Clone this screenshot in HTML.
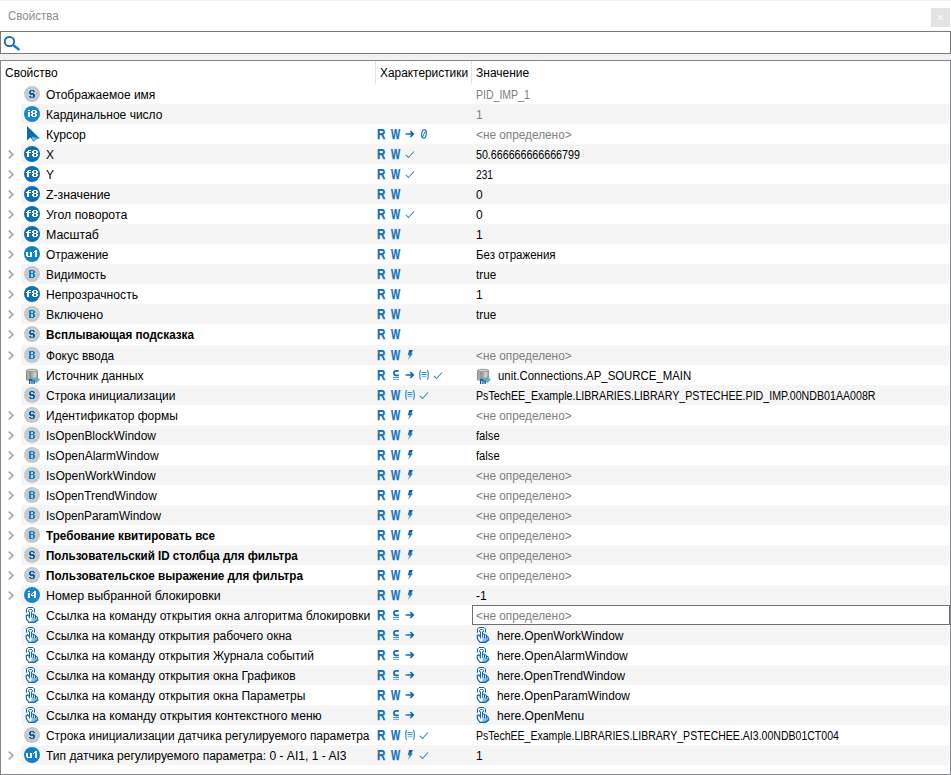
<!DOCTYPE html><html><head><meta charset="utf-8"><style>
*{margin:0;padding:0;box-sizing:border-box}
html,body{width:951px;height:775px;overflow:hidden;background:#fff}
body{position:relative;font-family:"Liberation Sans",sans-serif;font-size:12px;color:#000}
.a{position:absolute}
.t{position:absolute;white-space:nowrap;line-height:20px;height:20px;transform-origin:0 50%}
.band{position:absolute;left:21px;width:928px;height:20px;background:#f5f5f5}
.g{color:#7e7e7e}
.b{font-weight:bold}
svg{position:absolute;overflow:visible}
.rw{position:absolute;color:#1270b6;-webkit-text-stroke:0.25px #1270b6;font-weight:bold;font-size:14.5px;line-height:20px;height:20px;transform-origin:0 50%}
</style></head><body>
<div class="a" style="left:0;top:0;width:951px;height:1px;background:#f3f3f3"></div>
<div class="t" style="left:8px;top:6px;transform:scaleX(0.96);color:#8c8c8c">Свойства</div>
<div class="a" style="left:931px;top:8px;width:19px;height:19px;background:#e3e3e3"></div>
<svg style="left:931px;top:8px" width="19" height="19"><path d="M7.2 7.2 L11.8 11.8 M11.8 7.2 L7.2 11.8" stroke="#f7f7f7" stroke-width="1.3"/></svg>
<div class="a" style="left:0;top:31px;width:951px;height:23px;border:1px solid #7a7a7a;background:#fff"></div>
<svg style="left:0;top:31px" width="24" height="23"><circle cx="9.45" cy="10.5" r="4.7" fill="none" stroke="#0a5eaa" stroke-width="1.7"/><path d="M14 14.8 L18.6 18.2" stroke="#0a84c4" stroke-width="2.5" stroke-linecap="round"/></svg>
<div class="a" style="left:0;top:54px;width:951px;height:6px;background:#f0f0f0"></div>
<div class="a" style="left:0;top:60px;width:951px;height:715px;border:1px solid #828790;background:#fff"></div>
<div class="t" style="left:5px;top:63px">Свойство</div>
<div class="a" style="left:375px;top:61px;width:1px;height:23px;background:#e3e3e3"></div>
<div class="t" style="left:380px;top:63px;transform:scaleX(0.99)">Характеристики</div>
<div class="a" style="left:471px;top:61px;width:1px;height:23px;background:#e3e3e3"></div>
<div class="t" style="left:476px;top:63px">Значение</div>
<svg style="left:24px;top:86px" width="16" height="16" shape-rendering="auto"><circle cx="8" cy="8" r="8" fill="#c6c7c9"/><circle cx="8" cy="8" r="6.5" fill="#c9cacc"/><g fill="#0a64b4"><rect x="6" y="4" width="4" height="1"/><rect x="5" y="5" width="2" height="1"/><rect x="9" y="5" width="2" height="1"/><rect x="5" y="6" width="2" height="1"/><rect x="5" y="7" width="5" height="1"/><rect x="6" y="8" width="5" height="1"/><rect x="9" y="9" width="2" height="1"/><rect x="5" y="10" width="2" height="1"/><rect x="9" y="10" width="2" height="1"/><rect x="6" y="11" width="4" height="1"/></g></svg>
<div class="t" style="left:46px;top:85px">Отображаемое имя</div>

<div class="t g" style="left:476px;top:85px;transform:scaleX(0.877)">PID_IMP_1</div>
<div class="band" style="top:104px"></div>
<svg style="left:24px;top:106px" width="16" height="16" shape-rendering="auto"><circle cx="8" cy="8" r="8" fill="#1a88cc"/><g fill="#fff"><rect x="4" y="4" width="2" height="1"/><rect x="4" y="6" width="2" height="1"/><rect x="4" y="7" width="2" height="1"/><rect x="4" y="8" width="2" height="1"/><rect x="4" y="9" width="2" height="1"/><rect x="4" y="10" width="2" height="1"/></g><g fill="#fff"><rect x="8" y="4" width="4" height="1"/><rect x="7" y="5" width="2" height="1"/><rect x="11" y="5" width="2" height="1"/><rect x="7" y="6" width="2" height="1"/><rect x="11" y="6" width="2" height="1"/><rect x="8" y="7" width="4" height="1"/><rect x="7" y="8" width="2" height="1"/><rect x="11" y="8" width="2" height="1"/><rect x="7" y="9" width="2" height="1"/><rect x="11" y="9" width="2" height="1"/><rect x="8" y="10" width="4" height="1"/></g></svg>
<div class="t" style="left:46px;top:105px">Кардинальное число</div>

<div class="t g" style="left:476px;top:105px">1</div>
<svg style="left:20px;top:124px" width="24" height="20"><path d="M7 2 L19.8 14.5 L15.5 15.5 L13.5 18 L10.5 13.2 L7 16.5 Z" fill="#0b6ab5"/><path d="M12.5 12.5 L19.8 14.5 L15.5 15.8 L13.5 18 L11.8 14.5 Z" fill="#6ab0d8"/></svg>
<div class="t" style="left:46px;top:125px;transform:scaleX(1.024)">Курсор</div>
<div class="rw" style="left:377px;top:124.2px;transform:scaleX(0.8)">R</div><div class="rw" style="left:391px;top:124.2px;transform:scaleX(0.67)">W</div><svg style="left:405px;top:124px" width="10" height="20"><defs><linearGradient id="ag" x1="0" x2="1"><stop offset="0" stop-color="#2a9ad6"/><stop offset="1" stop-color="#0b5ea8"/></linearGradient></defs><rect x="0.5" y="9.15" width="7.5" height="1.7" fill="url(#ag)"/><path d="M5.4 7.2 L8.3 10 L5.4 12.8" fill="none" stroke="#0b62ac" stroke-width="1.6"/></svg><svg style="left:421px;top:124px" width="8" height="20"><ellipse cx="3" cy="9.8" rx="2.3" ry="4.3" transform="rotate(8 3 9.8)" fill="none" stroke="#2282c6" stroke-width="1.25"/><path d="M1.6 13.2 L4.6 6.4" stroke="#2282c6" stroke-width="1"/></svg>
<div class="t g" style="left:476px;top:125px;transform:scaleX(0.984)">&lt;не определено&gt;</div>
<div class="band" style="top:144px"></div>
<svg style="left:0;top:144px" width="16" height="20"><path d="M8.8 6.6 L12.8 10.5 L8.8 14.4" fill="none" stroke="#a6a6a6" stroke-width="1.7"/></svg>
<svg style="left:24px;top:146px" width="16" height="16" shape-rendering="auto"><circle cx="8" cy="8" r="8" fill="#0d6db5"/><g fill="#fff"><rect x="4" y="4" width="3" height="1"/><rect x="3" y="5" width="2" height="1"/><rect x="2" y="6" width="5" height="1"/><rect x="3" y="7" width="2" height="1"/><rect x="3" y="8" width="2" height="1"/><rect x="3" y="9" width="2" height="1"/><rect x="3" y="10" width="2" height="1"/></g><g fill="#fff"><rect x="9" y="4" width="4" height="1"/><rect x="8" y="5" width="2" height="1"/><rect x="12" y="5" width="2" height="1"/><rect x="8" y="6" width="2" height="1"/><rect x="12" y="6" width="2" height="1"/><rect x="9" y="7" width="4" height="1"/><rect x="8" y="8" width="2" height="1"/><rect x="12" y="8" width="2" height="1"/><rect x="8" y="9" width="2" height="1"/><rect x="12" y="9" width="2" height="1"/><rect x="9" y="10" width="4" height="1"/></g></svg>
<div class="t" style="left:46px;top:145px">X</div>
<div class="rw" style="left:377px;top:144.2px;transform:scaleX(0.8)">R</div><div class="rw" style="left:391px;top:144.2px;transform:scaleX(0.67)">W</div><svg style="left:405px;top:144px" width="10" height="20"><path d="M0.8 10.8 L3.5 13.5 L9 7.5" fill="none" stroke="#2d86c6" stroke-width="1.05"/></svg>
<div class="t" style="left:476px;top:145px;transform:scaleX(0.889)">50.666666666666799</div>
<svg style="left:0;top:164px" width="16" height="20"><path d="M8.8 6.6 L12.8 10.5 L8.8 14.4" fill="none" stroke="#a6a6a6" stroke-width="1.7"/></svg>
<svg style="left:24px;top:166px" width="16" height="16" shape-rendering="auto"><circle cx="8" cy="8" r="8" fill="#0d6db5"/><g fill="#fff"><rect x="4" y="4" width="3" height="1"/><rect x="3" y="5" width="2" height="1"/><rect x="2" y="6" width="5" height="1"/><rect x="3" y="7" width="2" height="1"/><rect x="3" y="8" width="2" height="1"/><rect x="3" y="9" width="2" height="1"/><rect x="3" y="10" width="2" height="1"/></g><g fill="#fff"><rect x="9" y="4" width="4" height="1"/><rect x="8" y="5" width="2" height="1"/><rect x="12" y="5" width="2" height="1"/><rect x="8" y="6" width="2" height="1"/><rect x="12" y="6" width="2" height="1"/><rect x="9" y="7" width="4" height="1"/><rect x="8" y="8" width="2" height="1"/><rect x="12" y="8" width="2" height="1"/><rect x="8" y="9" width="2" height="1"/><rect x="12" y="9" width="2" height="1"/><rect x="9" y="10" width="4" height="1"/></g></svg>
<div class="t" style="left:46px;top:165px">Y</div>
<div class="rw" style="left:377px;top:164.2px;transform:scaleX(0.8)">R</div><div class="rw" style="left:391px;top:164.2px;transform:scaleX(0.67)">W</div><svg style="left:405px;top:164px" width="10" height="20"><path d="M0.8 10.8 L3.5 13.5 L9 7.5" fill="none" stroke="#2d86c6" stroke-width="1.05"/></svg>
<div class="t" style="left:476px;top:165px;transform:scaleX(0.85)">231</div>
<div class="band" style="top:184px"></div>
<svg style="left:0;top:184px" width="16" height="20"><path d="M8.8 6.6 L12.8 10.5 L8.8 14.4" fill="none" stroke="#a6a6a6" stroke-width="1.7"/></svg>
<svg style="left:24px;top:186px" width="16" height="16" shape-rendering="auto"><circle cx="8" cy="8" r="8" fill="#0d6db5"/><g fill="#fff"><rect x="4" y="4" width="3" height="1"/><rect x="3" y="5" width="2" height="1"/><rect x="2" y="6" width="5" height="1"/><rect x="3" y="7" width="2" height="1"/><rect x="3" y="8" width="2" height="1"/><rect x="3" y="9" width="2" height="1"/><rect x="3" y="10" width="2" height="1"/></g><g fill="#fff"><rect x="9" y="4" width="4" height="1"/><rect x="8" y="5" width="2" height="1"/><rect x="12" y="5" width="2" height="1"/><rect x="8" y="6" width="2" height="1"/><rect x="12" y="6" width="2" height="1"/><rect x="9" y="7" width="4" height="1"/><rect x="8" y="8" width="2" height="1"/><rect x="12" y="8" width="2" height="1"/><rect x="8" y="9" width="2" height="1"/><rect x="12" y="9" width="2" height="1"/><rect x="9" y="10" width="4" height="1"/></g></svg>
<div class="t" style="left:46px;top:185px;transform:scaleX(1.025)">Z-значение</div>
<div class="rw" style="left:377px;top:184.2px;transform:scaleX(0.8)">R</div><div class="rw" style="left:391px;top:184.2px;transform:scaleX(0.67)">W</div>
<div class="t" style="left:476px;top:185px">0</div>
<svg style="left:0;top:204px" width="16" height="20"><path d="M8.8 6.6 L12.8 10.5 L8.8 14.4" fill="none" stroke="#a6a6a6" stroke-width="1.7"/></svg>
<svg style="left:24px;top:206px" width="16" height="16" shape-rendering="auto"><circle cx="8" cy="8" r="8" fill="#0d6db5"/><g fill="#fff"><rect x="4" y="4" width="3" height="1"/><rect x="3" y="5" width="2" height="1"/><rect x="2" y="6" width="5" height="1"/><rect x="3" y="7" width="2" height="1"/><rect x="3" y="8" width="2" height="1"/><rect x="3" y="9" width="2" height="1"/><rect x="3" y="10" width="2" height="1"/></g><g fill="#fff"><rect x="9" y="4" width="4" height="1"/><rect x="8" y="5" width="2" height="1"/><rect x="12" y="5" width="2" height="1"/><rect x="8" y="6" width="2" height="1"/><rect x="12" y="6" width="2" height="1"/><rect x="9" y="7" width="4" height="1"/><rect x="8" y="8" width="2" height="1"/><rect x="12" y="8" width="2" height="1"/><rect x="8" y="9" width="2" height="1"/><rect x="12" y="9" width="2" height="1"/><rect x="9" y="10" width="4" height="1"/></g></svg>
<div class="t" style="left:46px;top:205px;transform:scaleX(1.027)">Угол поворота</div>
<div class="rw" style="left:377px;top:204.2px;transform:scaleX(0.8)">R</div><div class="rw" style="left:391px;top:204.2px;transform:scaleX(0.67)">W</div><svg style="left:405px;top:204px" width="10" height="20"><path d="M0.8 10.8 L3.5 13.5 L9 7.5" fill="none" stroke="#2d86c6" stroke-width="1.05"/></svg>
<div class="t" style="left:476px;top:205px">0</div>
<div class="band" style="top:224px"></div>
<svg style="left:0;top:224px" width="16" height="20"><path d="M8.8 6.6 L12.8 10.5 L8.8 14.4" fill="none" stroke="#a6a6a6" stroke-width="1.7"/></svg>
<svg style="left:24px;top:226px" width="16" height="16" shape-rendering="auto"><circle cx="8" cy="8" r="8" fill="#0d6db5"/><g fill="#fff"><rect x="4" y="4" width="3" height="1"/><rect x="3" y="5" width="2" height="1"/><rect x="2" y="6" width="5" height="1"/><rect x="3" y="7" width="2" height="1"/><rect x="3" y="8" width="2" height="1"/><rect x="3" y="9" width="2" height="1"/><rect x="3" y="10" width="2" height="1"/></g><g fill="#fff"><rect x="9" y="4" width="4" height="1"/><rect x="8" y="5" width="2" height="1"/><rect x="12" y="5" width="2" height="1"/><rect x="8" y="6" width="2" height="1"/><rect x="12" y="6" width="2" height="1"/><rect x="9" y="7" width="4" height="1"/><rect x="8" y="8" width="2" height="1"/><rect x="12" y="8" width="2" height="1"/><rect x="8" y="9" width="2" height="1"/><rect x="12" y="9" width="2" height="1"/><rect x="9" y="10" width="4" height="1"/></g></svg>
<div class="t" style="left:46px;top:225px;transform:scaleX(1.03)">Масштаб</div>
<div class="rw" style="left:377px;top:224.2px;transform:scaleX(0.8)">R</div><div class="rw" style="left:391px;top:224.2px;transform:scaleX(0.67)">W</div>
<div class="t" style="left:476px;top:225px">1</div>
<svg style="left:0;top:244px" width="16" height="20"><path d="M8.8 6.6 L12.8 10.5 L8.8 14.4" fill="none" stroke="#a6a6a6" stroke-width="1.7"/></svg>
<svg style="left:24px;top:246px" width="16" height="16" shape-rendering="auto"><circle cx="8" cy="8" r="8" fill="#1282c8"/><g fill="#fff"><rect x="2" y="6" width="2" height="1"/><rect x="6" y="6" width="2" height="1"/><rect x="2" y="7" width="2" height="1"/><rect x="6" y="7" width="2" height="1"/><rect x="2" y="8" width="2" height="1"/><rect x="6" y="8" width="2" height="1"/><rect x="2" y="9" width="2" height="1"/><rect x="6" y="9" width="2" height="1"/><rect x="3" y="10" width="5" height="1"/></g><g fill="#fff"><rect x="11" y="4" width="2" height="1"/><rect x="10" y="5" width="3" height="1"/><rect x="9" y="6" width="1" height="1"/><rect x="11" y="6" width="2" height="1"/><rect x="11" y="7" width="2" height="1"/><rect x="11" y="8" width="2" height="1"/><rect x="11" y="9" width="2" height="1"/><rect x="11" y="10" width="2" height="1"/></g></svg>
<div class="t" style="left:46px;top:245px;transform:scaleX(0.994)">Отражение</div>
<div class="rw" style="left:377px;top:244.2px;transform:scaleX(0.8)">R</div><div class="rw" style="left:391px;top:244.2px;transform:scaleX(0.67)">W</div>
<div class="t" style="left:476px;top:245px;transform:scaleX(0.96)">Без отражения</div>
<div class="band" style="top:264px"></div>
<svg style="left:0;top:264px" width="16" height="20"><path d="M8.8 6.6 L12.8 10.5 L8.8 14.4" fill="none" stroke="#a6a6a6" stroke-width="1.7"/></svg>
<svg style="left:24px;top:266px" width="16" height="16" shape-rendering="auto"><circle cx="8" cy="8" r="8" fill="#c6c7c9"/><circle cx="8" cy="8" r="6.5" fill="#c9cacc"/><g fill="#1682ce"><rect x="5" y="4" width="5" height="1"/><rect x="5" y="5" width="2" height="1"/><rect x="9" y="5" width="2" height="1"/><rect x="5" y="6" width="2" height="1"/><rect x="9" y="6" width="2" height="1"/><rect x="5" y="7" width="5" height="1"/><rect x="5" y="8" width="2" height="1"/><rect x="9" y="8" width="2" height="1"/><rect x="5" y="9" width="2" height="1"/><rect x="9" y="9" width="2" height="1"/><rect x="5" y="10" width="2" height="1"/><rect x="9" y="10" width="2" height="1"/><rect x="5" y="11" width="5" height="1"/></g></svg>
<div class="t" style="left:46px;top:265px;transform:scaleX(0.985)">Видимость</div>
<div class="rw" style="left:377px;top:264.2px;transform:scaleX(0.8)">R</div><div class="rw" style="left:391px;top:264.2px;transform:scaleX(0.67)">W</div>
<div class="t" style="left:476px;top:265px;transform:scaleX(0.975)">true</div>
<svg style="left:0;top:284px" width="16" height="20"><path d="M8.8 6.6 L12.8 10.5 L8.8 14.4" fill="none" stroke="#a6a6a6" stroke-width="1.7"/></svg>
<svg style="left:24px;top:286px" width="16" height="16" shape-rendering="auto"><circle cx="8" cy="8" r="8" fill="#0d6db5"/><g fill="#fff"><rect x="4" y="4" width="3" height="1"/><rect x="3" y="5" width="2" height="1"/><rect x="2" y="6" width="5" height="1"/><rect x="3" y="7" width="2" height="1"/><rect x="3" y="8" width="2" height="1"/><rect x="3" y="9" width="2" height="1"/><rect x="3" y="10" width="2" height="1"/></g><g fill="#fff"><rect x="9" y="4" width="4" height="1"/><rect x="8" y="5" width="2" height="1"/><rect x="12" y="5" width="2" height="1"/><rect x="8" y="6" width="2" height="1"/><rect x="12" y="6" width="2" height="1"/><rect x="9" y="7" width="4" height="1"/><rect x="8" y="8" width="2" height="1"/><rect x="12" y="8" width="2" height="1"/><rect x="8" y="9" width="2" height="1"/><rect x="12" y="9" width="2" height="1"/><rect x="9" y="10" width="4" height="1"/></g></svg>
<div class="t" style="left:46px;top:285px;transform:scaleX(1.012)">Непрозрачность</div>
<div class="rw" style="left:377px;top:284.2px;transform:scaleX(0.8)">R</div><div class="rw" style="left:391px;top:284.2px;transform:scaleX(0.67)">W</div>
<div class="t" style="left:476px;top:285px">1</div>
<div class="band" style="top:304px"></div>
<svg style="left:0;top:304px" width="16" height="20"><path d="M8.8 6.6 L12.8 10.5 L8.8 14.4" fill="none" stroke="#a6a6a6" stroke-width="1.7"/></svg>
<svg style="left:24px;top:306px" width="16" height="16" shape-rendering="auto"><circle cx="8" cy="8" r="8" fill="#c6c7c9"/><circle cx="8" cy="8" r="6.5" fill="#c9cacc"/><g fill="#1682ce"><rect x="5" y="4" width="5" height="1"/><rect x="5" y="5" width="2" height="1"/><rect x="9" y="5" width="2" height="1"/><rect x="5" y="6" width="2" height="1"/><rect x="9" y="6" width="2" height="1"/><rect x="5" y="7" width="5" height="1"/><rect x="5" y="8" width="2" height="1"/><rect x="9" y="8" width="2" height="1"/><rect x="5" y="9" width="2" height="1"/><rect x="9" y="9" width="2" height="1"/><rect x="5" y="10" width="2" height="1"/><rect x="9" y="10" width="2" height="1"/><rect x="5" y="11" width="5" height="1"/></g></svg>
<div class="t" style="left:46px;top:305px;transform:scaleX(1.031)">Включено</div>
<div class="rw" style="left:377px;top:304.2px;transform:scaleX(0.8)">R</div><div class="rw" style="left:391px;top:304.2px;transform:scaleX(0.67)">W</div>
<div class="t" style="left:476px;top:305px;transform:scaleX(0.975)">true</div>
<svg style="left:0;top:324px" width="16" height="20"><path d="M8.8 6.6 L12.8 10.5 L8.8 14.4" fill="none" stroke="#a6a6a6" stroke-width="1.7"/></svg>
<svg style="left:24px;top:326px" width="16" height="16" shape-rendering="auto"><circle cx="8" cy="8" r="8" fill="#c6c7c9"/><circle cx="8" cy="8" r="6.5" fill="#c9cacc"/><g fill="#0a64b4"><rect x="6" y="4" width="4" height="1"/><rect x="5" y="5" width="2" height="1"/><rect x="9" y="5" width="2" height="1"/><rect x="5" y="6" width="2" height="1"/><rect x="5" y="7" width="5" height="1"/><rect x="6" y="8" width="5" height="1"/><rect x="9" y="9" width="2" height="1"/><rect x="5" y="10" width="2" height="1"/><rect x="9" y="10" width="2" height="1"/><rect x="6" y="11" width="4" height="1"/></g></svg>
<div class="t b" style="left:46px;top:325px;transform:scaleX(0.974)">Всплывающая подсказка</div>
<div class="rw" style="left:377px;top:324.2px;transform:scaleX(0.8)">R</div><div class="rw" style="left:391px;top:324.2px;transform:scaleX(0.67)">W</div>
<div class="band" style="top:345px"></div>
<svg style="left:0;top:345px" width="16" height="20"><path d="M8.8 6.6 L12.8 10.5 L8.8 14.4" fill="none" stroke="#a6a6a6" stroke-width="1.7"/></svg>
<svg style="left:24px;top:347px" width="16" height="16" shape-rendering="auto"><circle cx="8" cy="8" r="8" fill="#c6c7c9"/><circle cx="8" cy="8" r="6.5" fill="#c9cacc"/><g fill="#1682ce"><rect x="5" y="4" width="5" height="1"/><rect x="5" y="5" width="2" height="1"/><rect x="9" y="5" width="2" height="1"/><rect x="5" y="6" width="2" height="1"/><rect x="9" y="6" width="2" height="1"/><rect x="5" y="7" width="5" height="1"/><rect x="5" y="8" width="2" height="1"/><rect x="9" y="8" width="2" height="1"/><rect x="5" y="9" width="2" height="1"/><rect x="9" y="9" width="2" height="1"/><rect x="5" y="10" width="2" height="1"/><rect x="9" y="10" width="2" height="1"/><rect x="5" y="11" width="5" height="1"/></g></svg>
<div class="t" style="left:46px;top:346px;transform:scaleX(0.987)">Фокус ввода</div>
<div class="rw" style="left:377px;top:345.2px;transform:scaleX(0.8)">R</div><div class="rw" style="left:391px;top:345.2px;transform:scaleX(0.67)">W</div><svg style="left:405px;top:345px" width="10" height="20"><defs><linearGradient id="zg" x1="0" y1="0" x2="0" y2="1"><stop offset="0" stop-color="#0a56a6"/><stop offset="1" stop-color="#3aa2dc"/></linearGradient></defs><path d="M4.2 4.9 L7.9 4.9 L6.3 8.4 L7.9 8.4 L2.8 14.9 L4.5 10.3 L2.7 10.3 Z" fill="url(#zg)"/></svg>
<div class="t g" style="left:476px;top:346px;transform:scaleX(0.984)">&lt;не определено&gt;</div>
<svg style="left:26px;top:365px" width="16" height="20"><defs><linearGradient id="cyl" x1="0" x2="1"><stop offset="0" stop-color="#7e7e7e"/><stop offset="0.15" stop-color="#b4b4b4"/><stop offset="0.35" stop-color="#8e8e8e"/><stop offset="0.75" stop-color="#d8d8d8"/><stop offset="1" stop-color="#8a8a8a"/></linearGradient></defs><path d="M0 5.5 C0 4 12 4 12 5.5 L12 15 C12 16.3 0 16.3 0 15 Z" fill="url(#cyl)"/><ellipse cx="6" cy="5.5" rx="5.5" ry="1.3" fill="#d4d4d4" stroke="#8c8c8c" stroke-width="0.8"/><path d="M6.5 12.5 L10 12.5 L10 11 L14 14.8 L10 18.6 L10 17.2 L6.5 17.2 Z" fill="#5aa8d2" opacity="0.9"/><g fill="#0c56a6"><rect x="3" y="14.5" width="1.3" height="4.5"/><rect x="3" y="14" width="3" height="1.3"/><rect x="5.3" y="14.5" width="1.3" height="4.5"/><rect x="7.5" y="16" width="1.3" height="3"/><rect x="7.5" y="15.5" width="1.6" height="1"/></g></svg>
<div class="t" style="left:46px;top:366px;transform:scaleX(1.016)">Источник данных</div>
<div class="rw" style="left:377px;top:365.2px;transform:scaleX(0.8)">R</div><svg style="left:392px;top:365px" width="8" height="20"><path d="M6.8 5.9 L4.2 5.9 Q1.9 5.9 1.9 8.2 Q1.9 10.3 4.2 10.3 L6.8 10.3" fill="none" stroke="#0f6db6" stroke-width="1.7"/><path d="M1.2 12.5 L7 12.5" stroke="#2a98d6" stroke-width="1"/><path d="M1.2 14.5 L7 14.5" stroke="#62b6e2" stroke-width="1"/></svg><svg style="left:405px;top:365px" width="10" height="20"><defs><linearGradient id="ag" x1="0" x2="1"><stop offset="0" stop-color="#2a9ad6"/><stop offset="1" stop-color="#0b5ea8"/></linearGradient></defs><rect x="0.5" y="9.15" width="7.5" height="1.7" fill="url(#ag)"/><path d="M5.4 7.2 L8.3 10 L5.4 12.8" fill="none" stroke="#0b62ac" stroke-width="1.6"/></svg><svg style="left:419px;top:365px" width="11" height="20"><path d="M2 5.3 Q0.8 6 0.8 7.5 L0.8 12.5 Q0.8 14 2 14.6 M8 5.3 Q9.2 6 9.2 7.5 L9.2 12.5 Q9.2 14 8 14.6" fill="none" stroke="#3f82c2" stroke-width="1.15"/><path d="M2.5 7.5 L7.5 7.5 M2.5 9.5 L7.5 9.5" stroke="#2196d4" stroke-width="1"/><path d="M2.5 11.7 L7.5 11.7" stroke="#62b8e4" stroke-width="1"/></svg><svg style="left:433px;top:365px" width="10" height="20"><path d="M0.8 10.8 L3.5 13.5 L9 7.5" fill="none" stroke="#2d86c6" stroke-width="1.05"/></svg>
<svg style="left:477px;top:365px" width="16" height="20"><defs><linearGradient id="cyl" x1="0" x2="1"><stop offset="0" stop-color="#7e7e7e"/><stop offset="0.15" stop-color="#b4b4b4"/><stop offset="0.35" stop-color="#8e8e8e"/><stop offset="0.75" stop-color="#d8d8d8"/><stop offset="1" stop-color="#8a8a8a"/></linearGradient></defs><path d="M0 5.5 C0 4 12 4 12 5.5 L12 15 C12 16.3 0 16.3 0 15 Z" fill="url(#cyl)"/><ellipse cx="6" cy="5.5" rx="5.5" ry="1.3" fill="#d4d4d4" stroke="#8c8c8c" stroke-width="0.8"/><path d="M6.5 12.5 L10 12.5 L10 11 L14 14.8 L10 18.6 L10 17.2 L6.5 17.2 Z" fill="#5aa8d2" opacity="0.9"/><g fill="#0c56a6"><rect x="3" y="14.5" width="1.3" height="4.5"/><rect x="3" y="14" width="3" height="1.3"/><rect x="5.3" y="14.5" width="1.3" height="4.5"/><rect x="7.5" y="16" width="1.3" height="3"/><rect x="7.5" y="15.5" width="1.6" height="1"/></g></svg>
<div class="t" style="left:498px;top:366px;transform:scaleX(0.95)">unit.Connections.AP_SOURCE_MAIN</div>
<div class="band" style="top:385px"></div>
<svg style="left:24px;top:387px" width="16" height="16" shape-rendering="auto"><circle cx="8" cy="8" r="8" fill="#c6c7c9"/><circle cx="8" cy="8" r="6.5" fill="#c9cacc"/><g fill="#0a64b4"><rect x="6" y="4" width="4" height="1"/><rect x="5" y="5" width="2" height="1"/><rect x="9" y="5" width="2" height="1"/><rect x="5" y="6" width="2" height="1"/><rect x="5" y="7" width="5" height="1"/><rect x="6" y="8" width="5" height="1"/><rect x="9" y="9" width="2" height="1"/><rect x="5" y="10" width="2" height="1"/><rect x="9" y="10" width="2" height="1"/><rect x="6" y="11" width="4" height="1"/></g></svg>
<div class="t" style="left:46px;top:386px">Строка инициализации</div>
<div class="rw" style="left:377px;top:385.2px;transform:scaleX(0.8)">R</div><div class="rw" style="left:391px;top:385.2px;transform:scaleX(0.67)">W</div><svg style="left:405px;top:385px" width="11" height="20"><path d="M2 5.3 Q0.8 6 0.8 7.5 L0.8 12.5 Q0.8 14 2 14.6 M8 5.3 Q9.2 6 9.2 7.5 L9.2 12.5 Q9.2 14 8 14.6" fill="none" stroke="#3f82c2" stroke-width="1.15"/><path d="M2.5 7.5 L7.5 7.5 M2.5 9.5 L7.5 9.5" stroke="#2196d4" stroke-width="1"/><path d="M2.5 11.7 L7.5 11.7" stroke="#62b8e4" stroke-width="1"/></svg><svg style="left:419px;top:385px" width="10" height="20"><path d="M0.8 10.8 L3.5 13.5 L9 7.5" fill="none" stroke="#2d86c6" stroke-width="1.05"/></svg>
<div class="t" style="left:476px;top:386px;transform:scaleX(0.887)">PsTechEE_Example.LIBRARIES.LIBRARY_PSTECHEE.PID_IMP.00NDB01AA008R</div>
<svg style="left:0;top:405px" width="16" height="20"><path d="M8.8 6.6 L12.8 10.5 L8.8 14.4" fill="none" stroke="#a6a6a6" stroke-width="1.7"/></svg>
<svg style="left:24px;top:407px" width="16" height="16" shape-rendering="auto"><circle cx="8" cy="8" r="8" fill="#c6c7c9"/><circle cx="8" cy="8" r="6.5" fill="#c9cacc"/><g fill="#0a64b4"><rect x="6" y="4" width="4" height="1"/><rect x="5" y="5" width="2" height="1"/><rect x="9" y="5" width="2" height="1"/><rect x="5" y="6" width="2" height="1"/><rect x="5" y="7" width="5" height="1"/><rect x="6" y="8" width="5" height="1"/><rect x="9" y="9" width="2" height="1"/><rect x="5" y="10" width="2" height="1"/><rect x="9" y="10" width="2" height="1"/><rect x="6" y="11" width="4" height="1"/></g></svg>
<div class="t" style="left:46px;top:406px">Идентификатор формы</div>
<div class="rw" style="left:377px;top:405.2px;transform:scaleX(0.8)">R</div><div class="rw" style="left:391px;top:405.2px;transform:scaleX(0.67)">W</div><svg style="left:405px;top:405px" width="10" height="20"><defs><linearGradient id="zg" x1="0" y1="0" x2="0" y2="1"><stop offset="0" stop-color="#0a56a6"/><stop offset="1" stop-color="#3aa2dc"/></linearGradient></defs><path d="M4.2 4.9 L7.9 4.9 L6.3 8.4 L7.9 8.4 L2.8 14.9 L4.5 10.3 L2.7 10.3 Z" fill="url(#zg)"/></svg>
<div class="t g" style="left:476px;top:406px;transform:scaleX(0.984)">&lt;не определено&gt;</div>
<div class="band" style="top:425px"></div>
<svg style="left:0;top:425px" width="16" height="20"><path d="M8.8 6.6 L12.8 10.5 L8.8 14.4" fill="none" stroke="#a6a6a6" stroke-width="1.7"/></svg>
<svg style="left:24px;top:427px" width="16" height="16" shape-rendering="auto"><circle cx="8" cy="8" r="8" fill="#c6c7c9"/><circle cx="8" cy="8" r="6.5" fill="#c9cacc"/><g fill="#1682ce"><rect x="5" y="4" width="5" height="1"/><rect x="5" y="5" width="2" height="1"/><rect x="9" y="5" width="2" height="1"/><rect x="5" y="6" width="2" height="1"/><rect x="9" y="6" width="2" height="1"/><rect x="5" y="7" width="5" height="1"/><rect x="5" y="8" width="2" height="1"/><rect x="9" y="8" width="2" height="1"/><rect x="5" y="9" width="2" height="1"/><rect x="9" y="9" width="2" height="1"/><rect x="5" y="10" width="2" height="1"/><rect x="9" y="10" width="2" height="1"/><rect x="5" y="11" width="5" height="1"/></g></svg>
<div class="t" style="left:46px;top:426px;transform:scaleX(0.993)">IsOpenBlockWindow</div>
<div class="rw" style="left:377px;top:425.2px;transform:scaleX(0.8)">R</div><div class="rw" style="left:391px;top:425.2px;transform:scaleX(0.67)">W</div><svg style="left:405px;top:425px" width="10" height="20"><defs><linearGradient id="zg" x1="0" y1="0" x2="0" y2="1"><stop offset="0" stop-color="#0a56a6"/><stop offset="1" stop-color="#3aa2dc"/></linearGradient></defs><path d="M4.2 4.9 L7.9 4.9 L6.3 8.4 L7.9 8.4 L2.8 14.9 L4.5 10.3 L2.7 10.3 Z" fill="url(#zg)"/></svg>
<div class="t" style="left:476px;top:426px;transform:scaleX(0.933)">false</div>
<svg style="left:0;top:445px" width="16" height="20"><path d="M8.8 6.6 L12.8 10.5 L8.8 14.4" fill="none" stroke="#a6a6a6" stroke-width="1.7"/></svg>
<svg style="left:24px;top:447px" width="16" height="16" shape-rendering="auto"><circle cx="8" cy="8" r="8" fill="#c6c7c9"/><circle cx="8" cy="8" r="6.5" fill="#c9cacc"/><g fill="#1682ce"><rect x="5" y="4" width="5" height="1"/><rect x="5" y="5" width="2" height="1"/><rect x="9" y="5" width="2" height="1"/><rect x="5" y="6" width="2" height="1"/><rect x="9" y="6" width="2" height="1"/><rect x="5" y="7" width="5" height="1"/><rect x="5" y="8" width="2" height="1"/><rect x="9" y="8" width="2" height="1"/><rect x="5" y="9" width="2" height="1"/><rect x="9" y="9" width="2" height="1"/><rect x="5" y="10" width="2" height="1"/><rect x="9" y="10" width="2" height="1"/><rect x="5" y="11" width="5" height="1"/></g></svg>
<div class="t" style="left:46px;top:446px">IsOpenAlarmWindow</div>
<div class="rw" style="left:377px;top:445.2px;transform:scaleX(0.8)">R</div><div class="rw" style="left:391px;top:445.2px;transform:scaleX(0.67)">W</div><svg style="left:405px;top:445px" width="10" height="20"><defs><linearGradient id="zg" x1="0" y1="0" x2="0" y2="1"><stop offset="0" stop-color="#0a56a6"/><stop offset="1" stop-color="#3aa2dc"/></linearGradient></defs><path d="M4.2 4.9 L7.9 4.9 L6.3 8.4 L7.9 8.4 L2.8 14.9 L4.5 10.3 L2.7 10.3 Z" fill="url(#zg)"/></svg>
<div class="t" style="left:476px;top:446px;transform:scaleX(0.933)">false</div>
<div class="band" style="top:465px"></div>
<svg style="left:0;top:465px" width="16" height="20"><path d="M8.8 6.6 L12.8 10.5 L8.8 14.4" fill="none" stroke="#a6a6a6" stroke-width="1.7"/></svg>
<svg style="left:24px;top:467px" width="16" height="16" shape-rendering="auto"><circle cx="8" cy="8" r="8" fill="#c6c7c9"/><circle cx="8" cy="8" r="6.5" fill="#c9cacc"/><g fill="#1682ce"><rect x="5" y="4" width="5" height="1"/><rect x="5" y="5" width="2" height="1"/><rect x="9" y="5" width="2" height="1"/><rect x="5" y="6" width="2" height="1"/><rect x="9" y="6" width="2" height="1"/><rect x="5" y="7" width="5" height="1"/><rect x="5" y="8" width="2" height="1"/><rect x="9" y="8" width="2" height="1"/><rect x="5" y="9" width="2" height="1"/><rect x="9" y="9" width="2" height="1"/><rect x="5" y="10" width="2" height="1"/><rect x="9" y="10" width="2" height="1"/><rect x="5" y="11" width="5" height="1"/></g></svg>
<div class="t" style="left:46px;top:466px;transform:scaleX(1.006)">IsOpenWorkWindow</div>
<div class="rw" style="left:377px;top:465.2px;transform:scaleX(0.8)">R</div><div class="rw" style="left:391px;top:465.2px;transform:scaleX(0.67)">W</div><svg style="left:405px;top:465px" width="10" height="20"><defs><linearGradient id="zg" x1="0" y1="0" x2="0" y2="1"><stop offset="0" stop-color="#0a56a6"/><stop offset="1" stop-color="#3aa2dc"/></linearGradient></defs><path d="M4.2 4.9 L7.9 4.9 L6.3 8.4 L7.9 8.4 L2.8 14.9 L4.5 10.3 L2.7 10.3 Z" fill="url(#zg)"/></svg>
<div class="t g" style="left:476px;top:466px;transform:scaleX(0.984)">&lt;не определено&gt;</div>
<svg style="left:0;top:485px" width="16" height="20"><path d="M8.8 6.6 L12.8 10.5 L8.8 14.4" fill="none" stroke="#a6a6a6" stroke-width="1.7"/></svg>
<svg style="left:24px;top:487px" width="16" height="16" shape-rendering="auto"><circle cx="8" cy="8" r="8" fill="#c6c7c9"/><circle cx="8" cy="8" r="6.5" fill="#c9cacc"/><g fill="#1682ce"><rect x="5" y="4" width="5" height="1"/><rect x="5" y="5" width="2" height="1"/><rect x="9" y="5" width="2" height="1"/><rect x="5" y="6" width="2" height="1"/><rect x="9" y="6" width="2" height="1"/><rect x="5" y="7" width="5" height="1"/><rect x="5" y="8" width="2" height="1"/><rect x="9" y="8" width="2" height="1"/><rect x="5" y="9" width="2" height="1"/><rect x="9" y="9" width="2" height="1"/><rect x="5" y="10" width="2" height="1"/><rect x="9" y="10" width="2" height="1"/><rect x="5" y="11" width="5" height="1"/></g></svg>
<div class="t" style="left:46px;top:486px;transform:scaleX(0.986)">IsOpenTrendWindow</div>
<div class="rw" style="left:377px;top:485.2px;transform:scaleX(0.8)">R</div><div class="rw" style="left:391px;top:485.2px;transform:scaleX(0.67)">W</div><svg style="left:405px;top:485px" width="10" height="20"><defs><linearGradient id="zg" x1="0" y1="0" x2="0" y2="1"><stop offset="0" stop-color="#0a56a6"/><stop offset="1" stop-color="#3aa2dc"/></linearGradient></defs><path d="M4.2 4.9 L7.9 4.9 L6.3 8.4 L7.9 8.4 L2.8 14.9 L4.5 10.3 L2.7 10.3 Z" fill="url(#zg)"/></svg>
<div class="t g" style="left:476px;top:486px;transform:scaleX(0.984)">&lt;не определено&gt;</div>
<div class="band" style="top:505px"></div>
<svg style="left:0;top:505px" width="16" height="20"><path d="M8.8 6.6 L12.8 10.5 L8.8 14.4" fill="none" stroke="#a6a6a6" stroke-width="1.7"/></svg>
<svg style="left:24px;top:507px" width="16" height="16" shape-rendering="auto"><circle cx="8" cy="8" r="8" fill="#c6c7c9"/><circle cx="8" cy="8" r="6.5" fill="#c9cacc"/><g fill="#1682ce"><rect x="5" y="4" width="5" height="1"/><rect x="5" y="5" width="2" height="1"/><rect x="9" y="5" width="2" height="1"/><rect x="5" y="6" width="2" height="1"/><rect x="9" y="6" width="2" height="1"/><rect x="5" y="7" width="5" height="1"/><rect x="5" y="8" width="2" height="1"/><rect x="9" y="8" width="2" height="1"/><rect x="5" y="9" width="2" height="1"/><rect x="9" y="9" width="2" height="1"/><rect x="5" y="10" width="2" height="1"/><rect x="9" y="10" width="2" height="1"/><rect x="5" y="11" width="5" height="1"/></g></svg>
<div class="t" style="left:46px;top:506px;transform:scaleX(0.985)">IsOpenParamWindow</div>
<div class="rw" style="left:377px;top:505.2px;transform:scaleX(0.8)">R</div><div class="rw" style="left:391px;top:505.2px;transform:scaleX(0.67)">W</div><svg style="left:405px;top:505px" width="10" height="20"><defs><linearGradient id="zg" x1="0" y1="0" x2="0" y2="1"><stop offset="0" stop-color="#0a56a6"/><stop offset="1" stop-color="#3aa2dc"/></linearGradient></defs><path d="M4.2 4.9 L7.9 4.9 L6.3 8.4 L7.9 8.4 L2.8 14.9 L4.5 10.3 L2.7 10.3 Z" fill="url(#zg)"/></svg>
<div class="t g" style="left:476px;top:506px;transform:scaleX(0.984)">&lt;не определено&gt;</div>
<svg style="left:0;top:525px" width="16" height="20"><path d="M8.8 6.6 L12.8 10.5 L8.8 14.4" fill="none" stroke="#a6a6a6" stroke-width="1.7"/></svg>
<svg style="left:24px;top:527px" width="16" height="16" shape-rendering="auto"><circle cx="8" cy="8" r="8" fill="#c6c7c9"/><circle cx="8" cy="8" r="6.5" fill="#c9cacc"/><g fill="#1682ce"><rect x="5" y="4" width="5" height="1"/><rect x="5" y="5" width="2" height="1"/><rect x="9" y="5" width="2" height="1"/><rect x="5" y="6" width="2" height="1"/><rect x="9" y="6" width="2" height="1"/><rect x="5" y="7" width="5" height="1"/><rect x="5" y="8" width="2" height="1"/><rect x="9" y="8" width="2" height="1"/><rect x="5" y="9" width="2" height="1"/><rect x="9" y="9" width="2" height="1"/><rect x="5" y="10" width="2" height="1"/><rect x="9" y="10" width="2" height="1"/><rect x="5" y="11" width="5" height="1"/></g></svg>
<div class="t b" style="left:46px;top:526px;transform:scaleX(0.974)">Требование квитировать все</div>
<div class="rw" style="left:377px;top:525.2px;transform:scaleX(0.8)">R</div><div class="rw" style="left:391px;top:525.2px;transform:scaleX(0.67)">W</div><svg style="left:405px;top:525px" width="10" height="20"><defs><linearGradient id="zg" x1="0" y1="0" x2="0" y2="1"><stop offset="0" stop-color="#0a56a6"/><stop offset="1" stop-color="#3aa2dc"/></linearGradient></defs><path d="M4.2 4.9 L7.9 4.9 L6.3 8.4 L7.9 8.4 L2.8 14.9 L4.5 10.3 L2.7 10.3 Z" fill="url(#zg)"/></svg>
<div class="t g" style="left:476px;top:526px;transform:scaleX(0.984)">&lt;не определено&gt;</div>
<div class="band" style="top:545px"></div>
<svg style="left:0;top:545px" width="16" height="20"><path d="M8.8 6.6 L12.8 10.5 L8.8 14.4" fill="none" stroke="#a6a6a6" stroke-width="1.7"/></svg>
<svg style="left:24px;top:547px" width="16" height="16" shape-rendering="auto"><circle cx="8" cy="8" r="8" fill="#c6c7c9"/><circle cx="8" cy="8" r="6.5" fill="#c9cacc"/><g fill="#0a64b4"><rect x="6" y="4" width="4" height="1"/><rect x="5" y="5" width="2" height="1"/><rect x="9" y="5" width="2" height="1"/><rect x="5" y="6" width="2" height="1"/><rect x="5" y="7" width="5" height="1"/><rect x="6" y="8" width="5" height="1"/><rect x="9" y="9" width="2" height="1"/><rect x="5" y="10" width="2" height="1"/><rect x="9" y="10" width="2" height="1"/><rect x="6" y="11" width="4" height="1"/></g></svg>
<div class="t b" style="left:46px;top:546px;transform:scaleX(0.967)">Пользовательский ID столбца для фильтра</div>
<div class="rw" style="left:377px;top:545.2px;transform:scaleX(0.8)">R</div><div class="rw" style="left:391px;top:545.2px;transform:scaleX(0.67)">W</div><svg style="left:405px;top:545px" width="10" height="20"><defs><linearGradient id="zg" x1="0" y1="0" x2="0" y2="1"><stop offset="0" stop-color="#0a56a6"/><stop offset="1" stop-color="#3aa2dc"/></linearGradient></defs><path d="M4.2 4.9 L7.9 4.9 L6.3 8.4 L7.9 8.4 L2.8 14.9 L4.5 10.3 L2.7 10.3 Z" fill="url(#zg)"/></svg>
<div class="t g" style="left:476px;top:546px;transform:scaleX(0.984)">&lt;не определено&gt;</div>
<svg style="left:0;top:565px" width="16" height="20"><path d="M8.8 6.6 L12.8 10.5 L8.8 14.4" fill="none" stroke="#a6a6a6" stroke-width="1.7"/></svg>
<svg style="left:24px;top:567px" width="16" height="16" shape-rendering="auto"><circle cx="8" cy="8" r="8" fill="#c6c7c9"/><circle cx="8" cy="8" r="6.5" fill="#c9cacc"/><g fill="#0a64b4"><rect x="6" y="4" width="4" height="1"/><rect x="5" y="5" width="2" height="1"/><rect x="9" y="5" width="2" height="1"/><rect x="5" y="6" width="2" height="1"/><rect x="5" y="7" width="5" height="1"/><rect x="6" y="8" width="5" height="1"/><rect x="9" y="9" width="2" height="1"/><rect x="5" y="10" width="2" height="1"/><rect x="9" y="10" width="2" height="1"/><rect x="6" y="11" width="4" height="1"/></g></svg>
<div class="t b" style="left:46px;top:566px;transform:scaleX(0.975)">Пользовательское выражение для фильтра</div>
<div class="rw" style="left:377px;top:565.2px;transform:scaleX(0.8)">R</div><div class="rw" style="left:391px;top:565.2px;transform:scaleX(0.67)">W</div><svg style="left:405px;top:565px" width="10" height="20"><defs><linearGradient id="zg" x1="0" y1="0" x2="0" y2="1"><stop offset="0" stop-color="#0a56a6"/><stop offset="1" stop-color="#3aa2dc"/></linearGradient></defs><path d="M4.2 4.9 L7.9 4.9 L6.3 8.4 L7.9 8.4 L2.8 14.9 L4.5 10.3 L2.7 10.3 Z" fill="url(#zg)"/></svg>
<div class="t g" style="left:476px;top:566px;transform:scaleX(0.984)">&lt;не определено&gt;</div>
<div class="band" style="top:585px"></div>
<svg style="left:0;top:585px" width="16" height="20"><path d="M8.8 6.6 L12.8 10.5 L8.8 14.4" fill="none" stroke="#a6a6a6" stroke-width="1.7"/></svg>
<svg style="left:24px;top:587px" width="16" height="16" shape-rendering="auto"><circle cx="8" cy="8" r="8" fill="#1a88cc"/><g fill="#fff"><rect x="4" y="4" width="2" height="1"/><rect x="4" y="6" width="2" height="1"/><rect x="4" y="7" width="2" height="1"/><rect x="4" y="8" width="2" height="1"/><rect x="4" y="9" width="2" height="1"/><rect x="4" y="10" width="2" height="1"/></g><g fill="#fff"><rect x="10" y="4" width="2" height="1"/><rect x="9" y="5" width="3" height="1"/><rect x="8" y="6" width="1" height="1"/><rect x="10" y="6" width="2" height="1"/><rect x="7" y="7" width="1" height="1"/><rect x="10" y="7" width="2" height="1"/><rect x="7" y="8" width="5" height="1"/><rect x="10" y="9" width="2" height="1"/><rect x="10" y="10" width="2" height="1"/></g></svg>
<div class="t" style="left:46px;top:586px;transform:scaleX(1.032)">Номер выбранной блокировки</div>
<div class="rw" style="left:377px;top:585.2px;transform:scaleX(0.8)">R</div><div class="rw" style="left:391px;top:585.2px;transform:scaleX(0.67)">W</div><svg style="left:405px;top:585px" width="10" height="20"><defs><linearGradient id="zg" x1="0" y1="0" x2="0" y2="1"><stop offset="0" stop-color="#0a56a6"/><stop offset="1" stop-color="#3aa2dc"/></linearGradient></defs><path d="M4.2 4.9 L7.9 4.9 L6.3 8.4 L7.9 8.4 L2.8 14.9 L4.5 10.3 L2.7 10.3 Z" fill="url(#zg)"/></svg>
<div class="t" style="left:476px;top:586px">-1</div>
<svg style="left:24px;top:604px" width="16" height="20"><path d="M8 13 L13.5 14 L15.2 16 L11 19 L7 18.5 Z" fill="#7cb8da" opacity="0.9"/><path d="M3 9 L2.5 8.5 L2.5 5 L4 3.5 L9 3.5 L10.5 5 L10.5 8.5" fill="none" stroke="#0b66b2" stroke-width="1"/><path d="M4.5 8 L4.5 6.5 L5.3 5.5 L7.7 5.5 L8.5 6.5 L8.5 8" fill="none" stroke="#0b66b2" stroke-width="0.9"/><path d="M5.5 14.5 L5.5 7.5 M7.5 7.5 L7.5 13.5 M7.5 10 L9.5 10 L9.5 14 M9.5 11 L11.5 11 L11.5 14.5 M11.5 12.5 L13 12.5 L13.5 15" fill="none" stroke="#0b66b2" stroke-width="1"/><path d="M5.5 12.5 L3.5 10.8 L2.2 11.8 L2.5 15 L5 18.3 L10.5 18.3 L13.8 15.5" fill="none" stroke="#0b66b2" stroke-width="1.15"/></svg>
<div class="t" style="left:46px;top:606px;transform:scaleX(1.011)">Ссылка на команду открытия окна алгоритма блокировки</div>
<div class="rw" style="left:377px;top:605.2px;transform:scaleX(0.8)">R</div><svg style="left:392px;top:605px" width="8" height="20"><path d="M6.8 5.9 L4.2 5.9 Q1.9 5.9 1.9 8.2 Q1.9 10.3 4.2 10.3 L6.8 10.3" fill="none" stroke="#0f6db6" stroke-width="1.7"/><path d="M1.2 12.5 L7 12.5" stroke="#2a98d6" stroke-width="1"/><path d="M1.2 14.5 L7 14.5" stroke="#62b6e2" stroke-width="1"/></svg><svg style="left:405px;top:605px" width="10" height="20"><defs><linearGradient id="ag" x1="0" x2="1"><stop offset="0" stop-color="#2a9ad6"/><stop offset="1" stop-color="#0b5ea8"/></linearGradient></defs><rect x="0.5" y="9.15" width="7.5" height="1.7" fill="url(#ag)"/><path d="M5.4 7.2 L8.3 10 L5.4 12.8" fill="none" stroke="#0b62ac" stroke-width="1.6"/></svg>
<div class="a" style="left:472px;top:605px;width:478px;height:20px;border:1px solid #707070;background:#fff"></div>
<div class="t g" style="left:476px;top:606px;transform:scaleX(0.984)">&lt;не определено&gt;</div>
<div class="band" style="top:625px"></div>
<svg style="left:24px;top:624px" width="16" height="20"><path d="M8 13 L13.5 14 L15.2 16 L11 19 L7 18.5 Z" fill="#7cb8da" opacity="0.9"/><path d="M3 9 L2.5 8.5 L2.5 5 L4 3.5 L9 3.5 L10.5 5 L10.5 8.5" fill="none" stroke="#0b66b2" stroke-width="1"/><path d="M4.5 8 L4.5 6.5 L5.3 5.5 L7.7 5.5 L8.5 6.5 L8.5 8" fill="none" stroke="#0b66b2" stroke-width="0.9"/><path d="M5.5 14.5 L5.5 7.5 M7.5 7.5 L7.5 13.5 M7.5 10 L9.5 10 L9.5 14 M9.5 11 L11.5 11 L11.5 14.5 M11.5 12.5 L13 12.5 L13.5 15" fill="none" stroke="#0b66b2" stroke-width="1"/><path d="M5.5 12.5 L3.5 10.8 L2.2 11.8 L2.5 15 L5 18.3 L10.5 18.3 L13.8 15.5" fill="none" stroke="#0b66b2" stroke-width="1.15"/></svg>
<div class="t" style="left:46px;top:626px">Ссылка на команду открытия рабочего окна</div>
<div class="rw" style="left:377px;top:625.2px;transform:scaleX(0.8)">R</div><svg style="left:392px;top:625px" width="8" height="20"><path d="M6.8 5.9 L4.2 5.9 Q1.9 5.9 1.9 8.2 Q1.9 10.3 4.2 10.3 L6.8 10.3" fill="none" stroke="#0f6db6" stroke-width="1.7"/><path d="M1.2 12.5 L7 12.5" stroke="#2a98d6" stroke-width="1"/><path d="M1.2 14.5 L7 14.5" stroke="#62b6e2" stroke-width="1"/></svg><svg style="left:405px;top:625px" width="10" height="20"><defs><linearGradient id="ag" x1="0" x2="1"><stop offset="0" stop-color="#2a9ad6"/><stop offset="1" stop-color="#0b5ea8"/></linearGradient></defs><rect x="0.5" y="9.15" width="7.5" height="1.7" fill="url(#ag)"/><path d="M5.4 7.2 L8.3 10 L5.4 12.8" fill="none" stroke="#0b62ac" stroke-width="1.6"/></svg>
<svg style="left:475px;top:624px" width="16" height="20"><path d="M8 13 L13.5 14 L15.2 16 L11 19 L7 18.5 Z" fill="#7cb8da" opacity="0.9"/><path d="M3 9 L2.5 8.5 L2.5 5 L4 3.5 L9 3.5 L10.5 5 L10.5 8.5" fill="none" stroke="#0b66b2" stroke-width="1"/><path d="M4.5 8 L4.5 6.5 L5.3 5.5 L7.7 5.5 L8.5 6.5 L8.5 8" fill="none" stroke="#0b66b2" stroke-width="0.9"/><path d="M5.5 14.5 L5.5 7.5 M7.5 7.5 L7.5 13.5 M7.5 10 L9.5 10 L9.5 14 M9.5 11 L11.5 11 L11.5 14.5 M11.5 12.5 L13 12.5 L13.5 15" fill="none" stroke="#0b66b2" stroke-width="1"/><path d="M5.5 12.5 L3.5 10.8 L2.2 11.8 L2.5 15 L5 18.3 L10.5 18.3 L13.8 15.5" fill="none" stroke="#0b66b2" stroke-width="1.15"/></svg>
<div class="t" style="left:497px;top:626px;transform:scaleX(0.994)">here.OpenWorkWindow</div>
<svg style="left:24px;top:644px" width="16" height="20"><path d="M8 13 L13.5 14 L15.2 16 L11 19 L7 18.5 Z" fill="#7cb8da" opacity="0.9"/><path d="M3 9 L2.5 8.5 L2.5 5 L4 3.5 L9 3.5 L10.5 5 L10.5 8.5" fill="none" stroke="#0b66b2" stroke-width="1"/><path d="M4.5 8 L4.5 6.5 L5.3 5.5 L7.7 5.5 L8.5 6.5 L8.5 8" fill="none" stroke="#0b66b2" stroke-width="0.9"/><path d="M5.5 14.5 L5.5 7.5 M7.5 7.5 L7.5 13.5 M7.5 10 L9.5 10 L9.5 14 M9.5 11 L11.5 11 L11.5 14.5 M11.5 12.5 L13 12.5 L13.5 15" fill="none" stroke="#0b66b2" stroke-width="1"/><path d="M5.5 12.5 L3.5 10.8 L2.2 11.8 L2.5 15 L5 18.3 L10.5 18.3 L13.8 15.5" fill="none" stroke="#0b66b2" stroke-width="1.15"/></svg>
<div class="t" style="left:46px;top:646px">Ссылка на команду открытия Журнала событий</div>
<div class="rw" style="left:377px;top:645.2px;transform:scaleX(0.8)">R</div><svg style="left:392px;top:645px" width="8" height="20"><path d="M6.8 5.9 L4.2 5.9 Q1.9 5.9 1.9 8.2 Q1.9 10.3 4.2 10.3 L6.8 10.3" fill="none" stroke="#0f6db6" stroke-width="1.7"/><path d="M1.2 12.5 L7 12.5" stroke="#2a98d6" stroke-width="1"/><path d="M1.2 14.5 L7 14.5" stroke="#62b6e2" stroke-width="1"/></svg><svg style="left:405px;top:645px" width="10" height="20"><defs><linearGradient id="ag" x1="0" x2="1"><stop offset="0" stop-color="#2a9ad6"/><stop offset="1" stop-color="#0b5ea8"/></linearGradient></defs><rect x="0.5" y="9.15" width="7.5" height="1.7" fill="url(#ag)"/><path d="M5.4 7.2 L8.3 10 L5.4 12.8" fill="none" stroke="#0b62ac" stroke-width="1.6"/></svg>
<svg style="left:475px;top:644px" width="16" height="20"><path d="M8 13 L13.5 14 L15.2 16 L11 19 L7 18.5 Z" fill="#7cb8da" opacity="0.9"/><path d="M3 9 L2.5 8.5 L2.5 5 L4 3.5 L9 3.5 L10.5 5 L10.5 8.5" fill="none" stroke="#0b66b2" stroke-width="1"/><path d="M4.5 8 L4.5 6.5 L5.3 5.5 L7.7 5.5 L8.5 6.5 L8.5 8" fill="none" stroke="#0b66b2" stroke-width="0.9"/><path d="M5.5 14.5 L5.5 7.5 M7.5 7.5 L7.5 13.5 M7.5 10 L9.5 10 L9.5 14 M9.5 11 L11.5 11 L11.5 14.5 M11.5 12.5 L13 12.5 L13.5 15" fill="none" stroke="#0b66b2" stroke-width="1"/><path d="M5.5 12.5 L3.5 10.8 L2.2 11.8 L2.5 15 L5 18.3 L10.5 18.3 L13.8 15.5" fill="none" stroke="#0b66b2" stroke-width="1.15"/></svg>
<div class="t" style="left:497px;top:646px">here.OpenAlarmWindow</div>
<div class="band" style="top:665px"></div>
<svg style="left:24px;top:664px" width="16" height="20"><path d="M8 13 L13.5 14 L15.2 16 L11 19 L7 18.5 Z" fill="#7cb8da" opacity="0.9"/><path d="M3 9 L2.5 8.5 L2.5 5 L4 3.5 L9 3.5 L10.5 5 L10.5 8.5" fill="none" stroke="#0b66b2" stroke-width="1"/><path d="M4.5 8 L4.5 6.5 L5.3 5.5 L7.7 5.5 L8.5 6.5 L8.5 8" fill="none" stroke="#0b66b2" stroke-width="0.9"/><path d="M5.5 14.5 L5.5 7.5 M7.5 7.5 L7.5 13.5 M7.5 10 L9.5 10 L9.5 14 M9.5 11 L11.5 11 L11.5 14.5 M11.5 12.5 L13 12.5 L13.5 15" fill="none" stroke="#0b66b2" stroke-width="1"/><path d="M5.5 12.5 L3.5 10.8 L2.2 11.8 L2.5 15 L5 18.3 L10.5 18.3 L13.8 15.5" fill="none" stroke="#0b66b2" stroke-width="1.15"/></svg>
<div class="t" style="left:46px;top:666px">Ссылка на команду открытия окна Графиков</div>
<div class="rw" style="left:377px;top:665.2px;transform:scaleX(0.8)">R</div><svg style="left:392px;top:665px" width="8" height="20"><path d="M6.8 5.9 L4.2 5.9 Q1.9 5.9 1.9 8.2 Q1.9 10.3 4.2 10.3 L6.8 10.3" fill="none" stroke="#0f6db6" stroke-width="1.7"/><path d="M1.2 12.5 L7 12.5" stroke="#2a98d6" stroke-width="1"/><path d="M1.2 14.5 L7 14.5" stroke="#62b6e2" stroke-width="1"/></svg><svg style="left:405px;top:665px" width="10" height="20"><defs><linearGradient id="ag" x1="0" x2="1"><stop offset="0" stop-color="#2a9ad6"/><stop offset="1" stop-color="#0b5ea8"/></linearGradient></defs><rect x="0.5" y="9.15" width="7.5" height="1.7" fill="url(#ag)"/><path d="M5.4 7.2 L8.3 10 L5.4 12.8" fill="none" stroke="#0b62ac" stroke-width="1.6"/></svg>
<svg style="left:475px;top:664px" width="16" height="20"><path d="M8 13 L13.5 14 L15.2 16 L11 19 L7 18.5 Z" fill="#7cb8da" opacity="0.9"/><path d="M3 9 L2.5 8.5 L2.5 5 L4 3.5 L9 3.5 L10.5 5 L10.5 8.5" fill="none" stroke="#0b66b2" stroke-width="1"/><path d="M4.5 8 L4.5 6.5 L5.3 5.5 L7.7 5.5 L8.5 6.5 L8.5 8" fill="none" stroke="#0b66b2" stroke-width="0.9"/><path d="M5.5 14.5 L5.5 7.5 M7.5 7.5 L7.5 13.5 M7.5 10 L9.5 10 L9.5 14 M9.5 11 L11.5 11 L11.5 14.5 M11.5 12.5 L13 12.5 L13.5 15" fill="none" stroke="#0b66b2" stroke-width="1"/><path d="M5.5 12.5 L3.5 10.8 L2.2 11.8 L2.5 15 L5 18.3 L10.5 18.3 L13.8 15.5" fill="none" stroke="#0b66b2" stroke-width="1.15"/></svg>
<div class="t" style="left:497px;top:666px;transform:scaleX(0.982)">here.OpenTrendWindow</div>
<svg style="left:24px;top:684px" width="16" height="20"><path d="M8 13 L13.5 14 L15.2 16 L11 19 L7 18.5 Z" fill="#7cb8da" opacity="0.9"/><path d="M3 9 L2.5 8.5 L2.5 5 L4 3.5 L9 3.5 L10.5 5 L10.5 8.5" fill="none" stroke="#0b66b2" stroke-width="1"/><path d="M4.5 8 L4.5 6.5 L5.3 5.5 L7.7 5.5 L8.5 6.5 L8.5 8" fill="none" stroke="#0b66b2" stroke-width="0.9"/><path d="M5.5 14.5 L5.5 7.5 M7.5 7.5 L7.5 13.5 M7.5 10 L9.5 10 L9.5 14 M9.5 11 L11.5 11 L11.5 14.5 M11.5 12.5 L13 12.5 L13.5 15" fill="none" stroke="#0b66b2" stroke-width="1"/><path d="M5.5 12.5 L3.5 10.8 L2.2 11.8 L2.5 15 L5 18.3 L10.5 18.3 L13.8 15.5" fill="none" stroke="#0b66b2" stroke-width="1.15"/></svg>
<div class="t" style="left:46px;top:686px">Ссылка на команду открытия окна Параметры</div>
<div class="rw" style="left:377px;top:685.2px;transform:scaleX(0.8)">R</div><div class="rw" style="left:391px;top:685.2px;transform:scaleX(0.67)">W</div><svg style="left:405px;top:685px" width="10" height="20"><defs><linearGradient id="ag" x1="0" x2="1"><stop offset="0" stop-color="#2a9ad6"/><stop offset="1" stop-color="#0b5ea8"/></linearGradient></defs><rect x="0.5" y="9.15" width="7.5" height="1.7" fill="url(#ag)"/><path d="M5.4 7.2 L8.3 10 L5.4 12.8" fill="none" stroke="#0b62ac" stroke-width="1.6"/></svg>
<svg style="left:475px;top:684px" width="16" height="20"><path d="M8 13 L13.5 14 L15.2 16 L11 19 L7 18.5 Z" fill="#7cb8da" opacity="0.9"/><path d="M3 9 L2.5 8.5 L2.5 5 L4 3.5 L9 3.5 L10.5 5 L10.5 8.5" fill="none" stroke="#0b66b2" stroke-width="1"/><path d="M4.5 8 L4.5 6.5 L5.3 5.5 L7.7 5.5 L8.5 6.5 L8.5 8" fill="none" stroke="#0b66b2" stroke-width="0.9"/><path d="M5.5 14.5 L5.5 7.5 M7.5 7.5 L7.5 13.5 M7.5 10 L9.5 10 L9.5 14 M9.5 11 L11.5 11 L11.5 14.5 M11.5 12.5 L13 12.5 L13.5 15" fill="none" stroke="#0b66b2" stroke-width="1"/><path d="M5.5 12.5 L3.5 10.8 L2.2 11.8 L2.5 15 L5 18.3 L10.5 18.3 L13.8 15.5" fill="none" stroke="#0b66b2" stroke-width="1.15"/></svg>
<div class="t" style="left:497px;top:686px;transform:scaleX(0.986)">here.OpenParamWindow</div>
<div class="band" style="top:705px"></div>
<svg style="left:24px;top:704px" width="16" height="20"><path d="M8 13 L13.5 14 L15.2 16 L11 19 L7 18.5 Z" fill="#7cb8da" opacity="0.9"/><path d="M3 9 L2.5 8.5 L2.5 5 L4 3.5 L9 3.5 L10.5 5 L10.5 8.5" fill="none" stroke="#0b66b2" stroke-width="1"/><path d="M4.5 8 L4.5 6.5 L5.3 5.5 L7.7 5.5 L8.5 6.5 L8.5 8" fill="none" stroke="#0b66b2" stroke-width="0.9"/><path d="M5.5 14.5 L5.5 7.5 M7.5 7.5 L7.5 13.5 M7.5 10 L9.5 10 L9.5 14 M9.5 11 L11.5 11 L11.5 14.5 M11.5 12.5 L13 12.5 L13.5 15" fill="none" stroke="#0b66b2" stroke-width="1"/><path d="M5.5 12.5 L3.5 10.8 L2.2 11.8 L2.5 15 L5 18.3 L10.5 18.3 L13.8 15.5" fill="none" stroke="#0b66b2" stroke-width="1.15"/></svg>
<div class="t" style="left:46px;top:706px;transform:scaleX(1.012)">Ссылка на команду открытия контекстного меню</div>
<div class="rw" style="left:377px;top:705.2px;transform:scaleX(0.8)">R</div><svg style="left:392px;top:705px" width="8" height="20"><path d="M6.8 5.9 L4.2 5.9 Q1.9 5.9 1.9 8.2 Q1.9 10.3 4.2 10.3 L6.8 10.3" fill="none" stroke="#0f6db6" stroke-width="1.7"/><path d="M1.2 12.5 L7 12.5" stroke="#2a98d6" stroke-width="1"/><path d="M1.2 14.5 L7 14.5" stroke="#62b6e2" stroke-width="1"/></svg><svg style="left:405px;top:705px" width="10" height="20"><defs><linearGradient id="ag" x1="0" x2="1"><stop offset="0" stop-color="#2a9ad6"/><stop offset="1" stop-color="#0b5ea8"/></linearGradient></defs><rect x="0.5" y="9.15" width="7.5" height="1.7" fill="url(#ag)"/><path d="M5.4 7.2 L8.3 10 L5.4 12.8" fill="none" stroke="#0b62ac" stroke-width="1.6"/></svg>
<svg style="left:475px;top:704px" width="16" height="20"><path d="M8 13 L13.5 14 L15.2 16 L11 19 L7 18.5 Z" fill="#7cb8da" opacity="0.9"/><path d="M3 9 L2.5 8.5 L2.5 5 L4 3.5 L9 3.5 L10.5 5 L10.5 8.5" fill="none" stroke="#0b66b2" stroke-width="1"/><path d="M4.5 8 L4.5 6.5 L5.3 5.5 L7.7 5.5 L8.5 6.5 L8.5 8" fill="none" stroke="#0b66b2" stroke-width="0.9"/><path d="M5.5 14.5 L5.5 7.5 M7.5 7.5 L7.5 13.5 M7.5 10 L9.5 10 L9.5 14 M9.5 11 L11.5 11 L11.5 14.5 M11.5 12.5 L13 12.5 L13.5 15" fill="none" stroke="#0b66b2" stroke-width="1"/><path d="M5.5 12.5 L3.5 10.8 L2.2 11.8 L2.5 15 L5 18.3 L10.5 18.3 L13.8 15.5" fill="none" stroke="#0b66b2" stroke-width="1.15"/></svg>
<div class="t" style="left:497px;top:706px;transform:scaleX(1.006)">here.OpenMenu</div>
<svg style="left:24px;top:727px" width="16" height="16" shape-rendering="auto"><circle cx="8" cy="8" r="8" fill="#c6c7c9"/><circle cx="8" cy="8" r="6.5" fill="#c9cacc"/><g fill="#0a64b4"><rect x="6" y="4" width="4" height="1"/><rect x="5" y="5" width="2" height="1"/><rect x="9" y="5" width="2" height="1"/><rect x="5" y="6" width="2" height="1"/><rect x="5" y="7" width="5" height="1"/><rect x="6" y="8" width="5" height="1"/><rect x="9" y="9" width="2" height="1"/><rect x="5" y="10" width="2" height="1"/><rect x="9" y="10" width="2" height="1"/><rect x="6" y="11" width="4" height="1"/></g></svg>
<div class="t" style="left:46px;top:726px;transform:scaleX(0.994)">Строка инициализации датчика регулируемого параметра</div>
<div class="rw" style="left:377px;top:725.2px;transform:scaleX(0.8)">R</div><div class="rw" style="left:391px;top:725.2px;transform:scaleX(0.67)">W</div><svg style="left:405px;top:725px" width="11" height="20"><path d="M2 5.3 Q0.8 6 0.8 7.5 L0.8 12.5 Q0.8 14 2 14.6 M8 5.3 Q9.2 6 9.2 7.5 L9.2 12.5 Q9.2 14 8 14.6" fill="none" stroke="#3f82c2" stroke-width="1.15"/><path d="M2.5 7.5 L7.5 7.5 M2.5 9.5 L7.5 9.5" stroke="#2196d4" stroke-width="1"/><path d="M2.5 11.7 L7.5 11.7" stroke="#62b8e4" stroke-width="1"/></svg><svg style="left:419px;top:725px" width="10" height="20"><path d="M0.8 10.8 L3.5 13.5 L9 7.5" fill="none" stroke="#2d86c6" stroke-width="1.05"/></svg>
<div class="t" style="left:476px;top:726px;transform:scaleX(0.878)">PsTechEE_Example.LIBRARIES.LIBRARY_PSTECHEE.AI3.00NDB01CT004</div>
<div class="band" style="top:745px"></div>
<svg style="left:0;top:745px" width="16" height="20"><path d="M8.8 6.6 L12.8 10.5 L8.8 14.4" fill="none" stroke="#a6a6a6" stroke-width="1.7"/></svg>
<svg style="left:24px;top:747px" width="16" height="16" shape-rendering="auto"><circle cx="8" cy="8" r="8" fill="#1282c8"/><g fill="#fff"><rect x="2" y="6" width="2" height="1"/><rect x="6" y="6" width="2" height="1"/><rect x="2" y="7" width="2" height="1"/><rect x="6" y="7" width="2" height="1"/><rect x="2" y="8" width="2" height="1"/><rect x="6" y="8" width="2" height="1"/><rect x="2" y="9" width="2" height="1"/><rect x="6" y="9" width="2" height="1"/><rect x="3" y="10" width="5" height="1"/></g><g fill="#fff"><rect x="11" y="4" width="2" height="1"/><rect x="10" y="5" width="3" height="1"/><rect x="9" y="6" width="1" height="1"/><rect x="11" y="6" width="2" height="1"/><rect x="11" y="7" width="2" height="1"/><rect x="11" y="8" width="2" height="1"/><rect x="11" y="9" width="2" height="1"/><rect x="11" y="10" width="2" height="1"/></g></svg>
<div class="t" style="left:46px;top:746px;transform:scaleX(1.004)">Тип датчика регулируемого параметра: 0 - AI1, 1 - AI3</div>
<div class="rw" style="left:377px;top:745.2px;transform:scaleX(0.8)">R</div><div class="rw" style="left:391px;top:745.2px;transform:scaleX(0.67)">W</div><svg style="left:405px;top:745px" width="10" height="20"><defs><linearGradient id="zg" x1="0" y1="0" x2="0" y2="1"><stop offset="0" stop-color="#0a56a6"/><stop offset="1" stop-color="#3aa2dc"/></linearGradient></defs><path d="M4.2 4.9 L7.9 4.9 L6.3 8.4 L7.9 8.4 L2.8 14.9 L4.5 10.3 L2.7 10.3 Z" fill="url(#zg)"/></svg><svg style="left:419px;top:745px" width="10" height="20"><path d="M0.8 10.8 L3.5 13.5 L9 7.5" fill="none" stroke="#2d86c6" stroke-width="1.05"/></svg>
<div class="t" style="left:476px;top:746px">1</div>
</body></html>
